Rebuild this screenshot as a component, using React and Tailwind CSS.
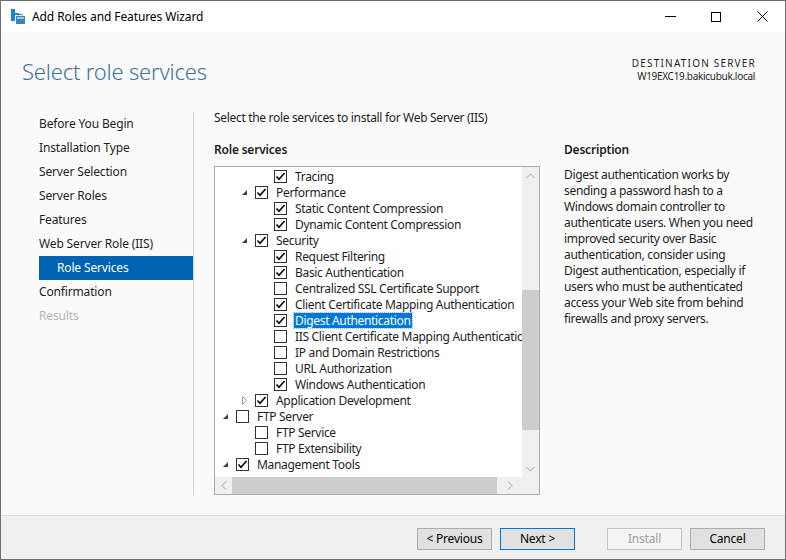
import React from "react";

const font = { fontFamily: '"Noto Sans", "Open Sans", "DejaVu Sans", sans-serif' };

function Check({ checked }) {
  return (
    <div className="w-[13px] h-[13px] border border-[#333333] bg-white flex-none flex items-center justify-center">
      {checked && (
        <svg width="11" height="11" viewBox="0 0 11 11">
          <polyline points="1.5,5.5 4,8.2 9.5,2" fill="none" stroke="#000" strokeWidth="1.6" />
        </svg>
      )}
    </div>
  );
}

function Arrow({ type }) {
  if (type === "open")
    return (
      <svg width="7" height="7" viewBox="0 0 7 7" className="flex-none">
        <polygon points="6,1 6,6 1,6" fill="#404040" />
      </svg>
    );
  if (type === "closed")
    return (
      <svg width="7" height="9" viewBox="0 0 7 9" className="flex-none">
        <polygon points="1.5,0.5 5.5,4.5 1.5,8.5" fill="none" stroke="#9a9a9a" strokeWidth="1" />
      </svg>
    );
  return <div className="w-[7px] flex-none" />;
}

const rows = [
  { l: 3, t: "Tracing", c: true },
  { l: 2, t: "Performance", c: true, a: "open" },
  { l: 3, t: "Static Content Compression", c: true },
  { l: 3, t: "Dynamic Content Compression", c: true },
  { l: 2, t: "Security", c: true, a: "open" },
  { l: 3, t: "Request Filtering", c: true },
  { l: 3, t: "Basic Authentication", c: true },
  { l: 3, t: "Centralized SSL Certificate Support", c: false },
  { l: 3, t: "Client Certificate Mapping Authentication", c: true },
  { l: 3, t: "Digest Authentication", c: true, sel: true },
  { l: 3, t: "IIS Client Certificate Mapping Authentication", c: false },
  { l: 3, t: "IP and Domain Restrictions", c: false },
  { l: 3, t: "URL Authorization", c: false },
  { l: 3, t: "Windows Authentication", c: true },
  { l: 2, t: "Application Development", c: true, a: "closed" },
  { l: 1, t: "FTP Server", c: false, a: "open" },
  { l: 2, t: "FTP Service", c: false },
  { l: 2, t: "FTP Extensibility", c: false },
  { l: 1, t: "Management Tools", c: true, a: "open" },
];

const indent = { 1: "pl-[7px]", 2: "pl-[26px]", 3: "pl-[45px]" };

const nav = [
  "Before You Begin",
  "Installation Type",
  "Server Selection",
  "Server Roles",
  "Features",
  "Web Server Role (IIS)",
  "Role Services",
  "Confirmation",
  "Results",
];

function Btn({ children, variant }) {
  const cls =
    variant === "primary"
      ? "bg-[#e1e1e1] border-[#0078d7] text-[#000]"
      : variant === "disabled"
      ? "bg-[#f4f4f4] border-[#c4c4c4] text-[#a0a0a0]"
      : "bg-[#e1e1e1] border-[#adadad] text-[#000]";
  return (
    <div className={`w-[75px] h-[22px] border flex items-center justify-center text-[12px] tracking-[-0.2px] ${cls}`}>
      {children}
    </div>
  );
}

export default function App() {
  return (
    <div style={font} className="w-[786px] h-[560px] border border-[#6f6f6f] bg-[#fafafa] flex flex-col overflow-hidden text-[#1e1e1e]">
      {/* Title bar */}
      <div className="h-[31px] bg-white flex items-center flex-none">
        <svg width="16" height="16" viewBox="0 0 16 16" className="ml-[9px] mt-[1px]">
          <rect x="1" y="0" width="4" height="12" fill="#1c7fd0" />
          <rect x="1" y="4" width="8" height="2" fill="#1c7fd0" />
          <rect x="6" y="7" width="9" height="8" fill="#3d82b8" />
          <rect x="7" y="8" width="7" height="2" fill="#9cc6e6" />
          <rect x="9" y="5.5" width="3" height="2" fill="none" stroke="#3d82b8" strokeWidth="1" />
        </svg>
        <div className="ml-[6px] text-[12px] text-black tracking-[-0.1px]">Add Roles and Features Wizard</div>
        <div className="ml-auto flex h-full">
          <div className="w-[46px] h-full flex items-center justify-center">
            <div className="w-[11px] h-px bg-black" />
          </div>
          <div className="w-[46px] h-full flex items-center justify-center">
            <div className="w-[10px] h-[10px] border border-black" />
          </div>
          <div className="w-[46px] h-full flex items-center justify-center">
            <svg width="11" height="11" viewBox="0 0 11 11">
              <path d="M0.5 0.5 L10.5 10.5 M10.5 0.5 L0.5 10.5" stroke="#000" strokeWidth="1" />
            </svg>
          </div>
        </div>
      </div>

      {/* Header */}
      <div className="h-[69px] flex-none flex items-start justify-between pl-[21px] pr-[30px]">
        <div className="mt-[24px] text-[22px] leading-[30px] font-light text-[#41729a] tracking-[-0.2px]">Select role services</div>
        <div className="mt-[25px] text-right text-[10px] leading-[13px] text-[#1e1e1e]">
          <div className="tracking-[1.2px] mr-[-1px]">DESTINATION SERVER</div>
          <div className="tracking-[-0.3px]">W19EXC19.bakicubuk.local</div>
        </div>
      </div>

      {/* Body */}
      <div className="flex-1 flex min-h-0">
        <div className="w-[193px] flex-none pl-[38px] pt-[11px] pb-[20px] flex">
          <div className="flex-1 flex flex-col border-r border-[#d4d4d4] text-[12px] tracking-[-0.15px]">
            {nav.map((n) =>
              n === "Role Services" ? (
                <div key={n} className="h-[24px] flex items-center pl-[18px] bg-[#0063b1] text-white">
                  {n}
                </div>
              ) : (
                <div key={n} className={`h-[24px] flex items-center ${n === "Results" ? "text-[#b5b5b5]" : "text-[#1e1e1e]"}`}>
                  {n}
                </div>
              )
            )}
          </div>
        </div>

        <div className="flex-1 pl-[20px] pt-[9px] flex flex-col min-w-0">
          <div className="text-[12px] leading-[16px] tracking-[-0.32px]">Select the role services to install for Web Server (IIS)</div>
          <div className="flex mt-[16px]">
            <div className="w-[326px] flex-none flex flex-col">
              <div className="text-[12px] leading-[16px] font-semibold tracking-[-0.2px]">Role services</div>
              <div className="mt-[8px] w-[326px] h-[329px] border border-[#acacac] bg-white flex flex-col">
                <div className="flex flex-1 min-h-0">
                  <div className="flex-1 overflow-hidden pt-[1px] min-w-0">
                    {rows.map((r, i) => (
                      <div key={i} className={`h-[16px] flex items-center whitespace-nowrap ${indent[r.l]}`}>
                        <div className="w-[14px] flex-none flex items-center">
                          <Arrow type={r.a} />
                        </div>
                        <Check checked={r.c} />
                        <div
                          className={`ml-[7px] text-[12px] leading-[15px] px-[1px] tracking-[-0.32px] ${
                            r.sel ? "bg-[#0078d7] text-white outline outline-1 outline-dotted outline-[#8bbbe6]" : "text-[#1e1e1e]"
                          }`}
                        >
                          {r.t}
                        </div>
                      </div>
                    ))}
                  </div>
                  <div className="w-[17px] flex-none bg-[#f0f0f0] flex flex-col items-center">
                    <div className="h-[17px] flex items-center justify-center">
                      <svg width="9" height="6" viewBox="0 0 9 6">
                        <polyline points="0.5,5 4.5,1 8.5,5" fill="none" stroke="#a3a3a3" strokeWidth="1" />
                      </svg>
                    </div>
                    <div className="mt-[106px] w-[17px] h-[140px] bg-[#cdcdcd]" />
                    <div className="mt-auto h-[17px] flex items-center justify-center">
                      <svg width="9" height="6" viewBox="0 0 9 6">
                        <polyline points="0.5,1 4.5,5 8.5,1" fill="none" stroke="#a3a3a3" strokeWidth="1" />
                      </svg>
                    </div>
                  </div>
                </div>
                <div className="h-[17px] flex-none flex bg-[#f0f0f0]">
                  <div className="w-[17px] flex items-center justify-center">
                    <svg width="6" height="9" viewBox="0 0 6 9">
                      <polyline points="5,0.5 1,4.5 5,8.5" fill="none" stroke="#a3a3a3" strokeWidth="1" />
                    </svg>
                  </div>
                  <div className="w-[265px] h-[17px] bg-[#cdcdcd]" />
                  <div className="flex-1 flex items-center justify-center">
                    <svg width="6" height="9" viewBox="0 0 6 9">
                      <polyline points="1,0.5 5,4.5 1,8.5" fill="none" stroke="#a3a3a3" strokeWidth="1" />
                    </svg>
                  </div>
                  <div className="w-[17px]" />
                </div>
              </div>
            </div>
            <div className="ml-[24px] flex-1 pr-[10px]">
              <div className="text-[12px] leading-[16px] font-semibold tracking-[-0.2px]">Description</div>
              <div className="mt-[9px] text-[12px] leading-[16px] whitespace-nowrap tracking-[-0.32px]">
                Digest authentication works by<br />
                sending a password hash to a<br />
                Windows domain controller to<br />
                authenticate users. When you need<br />
                improved security over Basic<br />
                authentication, consider using<br />
                Digest authentication, especially if<br />
                users who must be authenticated<br />
                access your Web site from behind<br />
                firewalls and proxy servers.
              </div>
            </div>
          </div>
        </div>
      </div>

      {/* Footer */}
      <div className="h-[44px] flex-none border-t border-[#dfdfdf] bg-[#f0f0f0] flex items-start pt-[12px] pr-[20px]">
        <div className="ml-auto flex">
          <Btn>&lt; Previous</Btn>
          <div className="ml-[8px]"><Btn variant="primary">Next &gt;</Btn></div>
          <div className="ml-[32px]"><Btn variant="disabled">Install</Btn></div>
          <div className="ml-[8px]"><Btn>Cancel</Btn></div>
        </div>
      </div>
    </div>
  );
}
